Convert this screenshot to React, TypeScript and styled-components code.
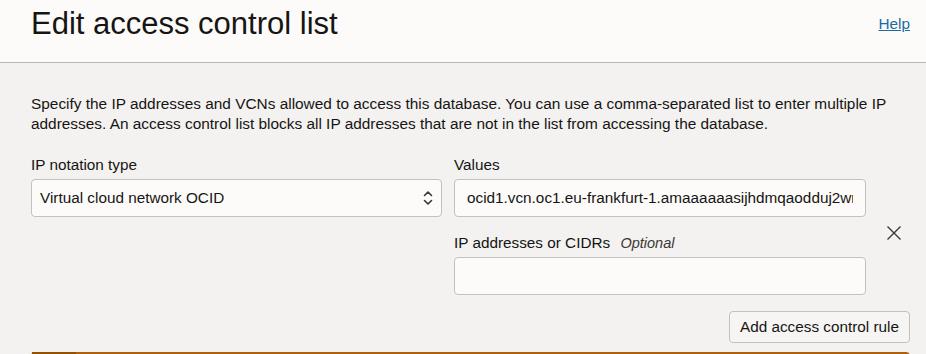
import styled, { createGlobalStyle } from "styled-components";

const GlobalStyle = createGlobalStyle`
  html, body {
    margin: 0;
    padding: 0;
    background: #f3f2f0;
    font-family: "Liberation Sans", Arial, sans-serif;
    color: #161513;
  }
`;

const VALUE = "ocid1.vcn.oc1.eu-frankfurt-1.amaaaaaasijhdmqaodduj2wmxq";

function App() {
  return (
    <>
      <GlobalStyle />
      <Page>
        <Header>
          <Title>Edit access control list</Title>
          <HelpLink href="#">Help</HelpLink>
        </Header>
        <Body>
          <Intro>
            Specify the IP addresses and VCNs allowed to access this database.
            You can use a comma-separated list to enter multiple IP addresses.
            An access control list blocks all IP addresses that are not in the
            list from accessing the database.
          </Intro>
          <RuleGrid>
            <Field>
              <Label>IP notation type</Label>
              <SelectBox>
                <span>Virtual cloud network OCID</span>
                <svg width="10" height="16" viewBox="0 0 10 16" fill="none">
                  <path
                    d="M1.5 5.5 L5 2 L8.5 5.5"
                    stroke="#3a3835"
                    strokeWidth="1.6"
                    strokeLinecap="round"
                    strokeLinejoin="round"
                  />
                  <path
                    d="M1.5 10.5 L5 14 L8.5 10.5"
                    stroke="#3a3835"
                    strokeWidth="1.6"
                    strokeLinecap="round"
                    strokeLinejoin="round"
                  />
                </svg>
              </SelectBox>
            </Field>
            <Field>
              <Label>Values</Label>
              <TextInput readOnly value={VALUE} />
            </Field>
            <span />
            <span />
            <Field>
              <Label>
                IP addresses or CIDRs <Optional>Optional</Optional>
              </Label>
              <TextInput readOnly value="" />
            </Field>
            <RemoveButton aria-label="Remove">
              <svg width="16" height="16" viewBox="0 0 16 16">
                <path
                  d="M1.5 1.5 L14.5 14.5 M14.5 1.5 L1.5 14.5"
                  stroke="#3a3835"
                  strokeWidth="1.4"
                />
              </svg>
            </RemoveButton>
          </RuleGrid>
          <Actions>
            <Button>Add access control rule</Button>
          </Actions>
          <NextCard>
            <Tab />
          </NextCard>
        </Body>
      </Page>
    </>
  );
}

const Page = styled.div`
  width: 926px;
  height: 354px;
  overflow: hidden;
`;

const Header = styled.div`
  height: 62px;
  background: #fcfbfa;
  border-bottom: 1px solid #bdb6ad;
  display: flex;
  align-items: flex-start;
  justify-content: space-between;
  padding: 0 16px 0 31px;
`;

const Title = styled.h1`
  margin: 5px 0 0;
  font-size: 31px;
  font-weight: 400;
  line-height: 38px;
`;

const HelpLink = styled.a`
  margin-top: 14px;
  font-size: 15.3px;
  line-height: 20px;
  color: #1a6ba0;
  text-decoration: underline;
`;

const Body = styled.div`
  padding: 31px 16px 0 31px;
`;

const Intro = styled.p`
  margin: 0;
  font-size: 15.4px;
  line-height: 20px;
  padding-right: 10px;
`;

const RuleGrid = styled.div`
  margin-top: 21px;
  display: grid;
  grid-template-columns: 411px 412px 32px;
  column-gap: 12px;
  row-gap: 16px;
`;

const Field = styled.div`
  display: flex;
  flex-direction: column;
  gap: 4px;
`;

const Label = styled.label`
  font-size: 15.3px;
  line-height: 20px;
`;

const Optional = styled.span`
  font-style: italic;
  font-size: 14.5px;
  margin-left: 6px;
  color: #3a3835;
`;

const SelectBox = styled.div`
  height: 38px;
  box-sizing: border-box;
  border: 1px solid #c4c0ba;
  border-radius: 4px;
  background: #fcfbfa;
  display: flex;
  align-items: center;
  justify-content: space-between;
  padding: 0 8px 0 8px;
  font-size: 15.3px;
`;

const TextInput = styled.input`
  height: 38px;
  box-sizing: border-box;
  border: 1px solid #c4c0ba;
  border-radius: 4px;
  background: #fcfbfa;
  padding: 0 12px;
  font-family: "Liberation Sans", Arial, sans-serif;
  font-size: 15.3px;
  color: #161513;
  outline: none;
  width: 100%;
`;

const RemoveButton = styled.button`
  align-self: start;
  margin-top: -8px;
  background: none;
  border: none;
  padding: 0;
  width: 32px;
  height: 16px;
  display: flex;
  justify-content: center;
`;

const Actions = styled.div`
  margin-top: 16px;
  display: flex;
  justify-content: flex-end;
`;

const Button = styled.button`
  height: 32px;
  padding: 0 10px;
  border: 1px solid #c4c0ba;
  border-radius: 4px;
  background: #f6f5f3;
  font-family: "Liberation Sans", Arial, sans-serif;
  font-size: 15.3px;
  color: #161513;
`;

const NextCard = styled.div`
  margin-top: 9px;
  height: 12px;
  border-top: 2px solid #b0600a;
  border-left: 1px solid #b0600a;
  border-right: 1px solid #b0600a;
  border-radius: 4px 4px 0 0;
  position: relative;
`;

const Tab = styled.div`
  position: absolute;
  top: -2px;
  left: 0;
  width: 44px;
  height: 2px;
  background: #955000;
`;

export default App;
